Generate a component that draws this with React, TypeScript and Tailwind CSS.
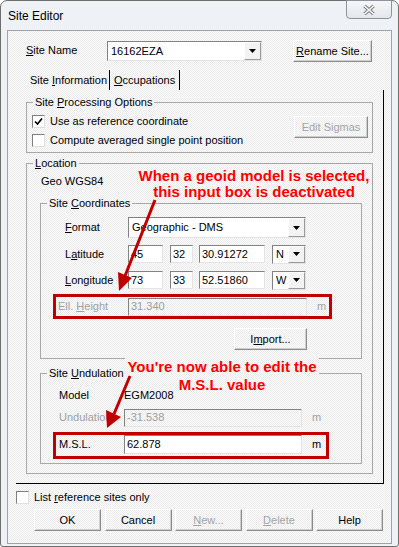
import React from "react";

const DITHER =
  "bg-[image:repeating-conic-gradient(#ebebeb_0%_25%,#fcfcfc_0%_50%)] bg-[length:2px_2px]";
const FIELD =
  "border border-t-[#828282] border-l-[#828282] border-b-[#e4e4e4] border-r-[#e4e4e4] flex items-center whitespace-nowrap overflow-hidden shrink-0";
const BTN =
  "h-[22px] shrink-0 flex items-center justify-center border border-t-white border-l-white border-b-[#8c8c8c] border-r-[#8c8c8c] shadow-[inset_-1px_-1px_0_#cfcfcf] whitespace-nowrap";
const GROUP = "border border-[#a8a8a8] min-w-0";
const LEGEND = "ml-[6px] px-[2px] leading-[12px]";

function Field({
  value,
  className = "",
  disabled = false,
}: {
  value: string;
  className?: string;
  disabled?: boolean;
}) {
  return (
    <div
      className={`${FIELD} pl-[2px] ${disabled ? "text-[#9d9d9d]" : "bg-white text-black"} ${className}`}
    >
      {value}
    </div>
  );
}

function Combo({ value, className = "" }: { value: string; className?: string }) {
  return (
    <div className={`${FIELD} bg-white ${className}`}>
      <span className="flex-1 pl-[3px]">{value}</span>
      <span className="w-[17px] h-full shrink-0 bg-[#f3f3f3] border border-t-white border-l-white border-b-[#9a9a9a] border-r-[#9a9a9a] flex items-center justify-center">
        <svg width="7" height="4" viewBox="0 0 7 4">
          <path d="M0 0H7L3.5 4Z" fill="#000" />
        </svg>
      </span>
    </div>
  );
}

function Check({ checked = false }: { checked?: boolean }) {
  return (
    <div className="w-[13px] h-[13px] shrink-0 bg-white border border-t-[#808080] border-l-[#808080] border-b-[#e0e0e0] border-r-[#e0e0e0] flex items-center justify-center">
      {checked && (
        <svg width="9" height="9" viewBox="0 0 9 9">
          <path d="M1 4.5L3.5 7L8 1.5" stroke="#000" strokeWidth="1.7" fill="none" />
        </svg>
      )}
    </div>
  );
}

export default function App() {
  return (
    <div className="w-[399px] h-[547px] relative font-['Liberation_Sans',Arial,sans-serif] text-[11px] text-black">
      <div className="w-full h-full border border-[#6e6e6e] rounded-t-[7px] rounded-b-[3px] bg-[#eef2f6] flex flex-col">
        {/* title bar */}
        <div className="h-[29px] shrink-0 flex items-start">
          <div className="self-center pl-[7px] text-[12px]">Site Editor</div>
          <div className="ml-auto mr-[6px] -mt-[1px] w-[46px] h-[19px] rounded-b-[4px] border border-[#8d949c] bg-gradient-to-b from-[#f6f7f9] to-[#e3e7ec] flex items-center justify-center">
            <svg width="14" height="12" viewBox="0 0 14 12">
              <path d="M2.5 2L11.5 10M11.5 2L2.5 10" stroke="#7a7a7a" strokeWidth="3.6" />
              <path d="M2.5 2L11.5 10M11.5 2L2.5 10" stroke="#fafafa" strokeWidth="1.6" />
            </svg>
          </div>
        </div>

        {/* client */}
        <div className={`mx-[6px] h-[514px] shrink-0 border border-[#9aa4ae] ${DITHER} flex flex-col`}>
          {/* site name row */}
          <div className="mt-[9px] h-[21px] pl-[18px] flex items-start">
            <div className="w-[81px] h-[21px] flex items-center">
              <span>
                <u>S</u>ite Name
              </span>
            </div>
            <Combo value="16162EZA" className="mt-[1px] w-[155px] h-[20px]" />
            <div className={`${BTN} ml-[31px] w-[79px] h-[21px]`}>
              <span>
                <u>R</u>ename Site...
              </span>
            </div>
          </div>

          {/* tabs */}
          <div className="mt-[9px] h-[20px] flex">
            <div className="ml-[8px] w-[94px] border-r border-black pl-[14px] flex items-center">
              <span>
                Site <u>I</u>nformation
              </span>
            </div>
            <div className="w-[70px] border-r border-black pl-[4px] flex items-center">
              <span>
                <u>O</u>ccupations
              </span>
            </div>
          </div>

          {/* tab page */}
          <div className="ml-[8px] w-[368px] h-[394px] border-r border-b border-black flex flex-col">
            <fieldset className={`${GROUP} ml-[10px] mt-[6px] w-[347px]`}>
              <legend className={LEGEND}>
                Site <u>P</u>rocessing Options
              </legend>
              <div className="flex">
                <div className="pl-[5px] pt-[4px] pb-[2px] flex flex-col">
                  <div className="h-[19px] flex items-center gap-[5px]">
                    <Check checked />
                    <span>Use as reference coordinate</span>
                  </div>
                  <div className="h-[19px] flex items-center gap-[5px]">
                    <Check />
                    <span>Compute averaged single point position</span>
                  </div>
                </div>
                <div className={`${BTN} ml-auto mr-[4px] mt-[8px] w-[74px] text-[#a3a3a3]`}>
                  Edit Sigmas
                </div>
              </div>
            </fieldset>

            <fieldset className={`${GROUP} ml-[10px] mt-[4px] w-[347px] pb-[9px]`}>
              <legend className={LEGEND}>
                <u>L</u>ocation
              </legend>
              <div className="mt-[5px] h-[14px] pl-[14px] flex items-center">Geo WGS84</div>

              <fieldset className={`${GROUP} ml-[13px] mt-[9px] w-[322px] pb-[8px]`}>
                <legend className={LEGEND}>
                  Site <u>C</u>oordinates
                </legend>
                <div className="mt-[8px] h-[21px] pl-[24px] flex items-center">
                  <div className="w-[63px]">
                    <u>F</u>ormat
                  </div>
                  <Combo value="Geographic - DMS" className="w-[178px] h-[21px]" />
                </div>
                <div className="mt-[7px] h-[18px] pl-[24px] flex items-center">
                  <div className="w-[63px]">
                    L<u>a</u>titude
                  </div>
                  <Field value="45" className="w-[35px] h-[18px]" />
                  <Field value="32" className="ml-[7px] w-[23px] h-[18px]" />
                  <Field value="30.91272" className="ml-[6px] w-[66px] h-[18px]" />
                  <Combo value="N" className="ml-[7px] w-[34px] h-[19px]" />
                </div>
                <div className="mt-[8px] h-[18px] pl-[24px] flex items-center">
                  <div className="w-[63px]">
                    <u>L</u>ongitude
                  </div>
                  <Field value="73" className="w-[35px] h-[18px]" />
                  <Field value="33" className="ml-[7px] w-[23px] h-[18px]" />
                  <Field value="52.51860" className="ml-[6px] w-[66px] h-[18px]" />
                  <Combo value="W" className="ml-[7px] w-[34px] h-[19px]" />
                </div>
                <div className="ml-[12px] mt-[5px] w-[279px] h-[25px] border-[3px] border-[#c00000] pl-[2px] flex items-center text-[#a0a0a0]">
                  <div className="w-[70px]">
                    Ell. <u>H</u>eight
                  </div>
                  <Field value="31.340" disabled className="w-[179px] h-[18px]" />
                  <span className="ml-[10px]">m</span>
                </div>
                <div className={`${BTN} ml-[193px] mt-[9px] w-[73px]`}>
                  <span>
                    I<u>m</u>port...
                  </span>
                </div>
              </fieldset>

              <fieldset className={`${GROUP} ml-[13px] mt-[8px] w-[322px] pb-[4px]`}>
                <legend className={LEGEND}>
                  Site <u>U</u>ndulation
                </legend>
                <div className="mt-[6px] h-[20px] pl-[18px] flex items-center">
                  <div className="w-[65px]">Model</div>
                  <span>EGM2008</span>
                </div>
                <div className="mt-[3px] h-[19px] pl-[18px] flex items-center text-[#a0a0a0]">
                  <div className="w-[65px]">Undulation</div>
                  <Field value="-31.538" disabled className="w-[178px] h-[18px]" />
                  <span className="ml-[10px]">m</span>
                </div>
                <div className="ml-[12px] mt-[5px] w-[276px] h-[27px] border-[3px] border-[#c00000] pl-[3px] flex items-start">
                  <div className="w-[65px] h-[19px] flex items-center">M.S.L.</div>
                  <Field value="62.878" className="w-[178px] h-[19px]" />
                  <span className="ml-[10px] h-[19px] flex items-center">m</span>
                </div>
              </fieldset>
            </fieldset>
          </div>

          {/* list reference */}
          <div className="mt-[6px] h-[14px] pl-[8px] flex items-center gap-[5px]">
            <Check />
            <span>
              List <u>r</u>eference sites only
            </span>
          </div>

          {/* buttons */}
          <div className="mt-[5px] pl-[26px] flex gap-[3.5px]">
            <div className={`${BTN} w-[67px]`}>OK</div>
            <div className={`${BTN} w-[67px]`}>Cancel</div>
            <div className={`${BTN} w-[67px] text-[#a3a3a3]`}>
              <span>
                <u>N</u>ew...
              </span>
            </div>
            <div className={`${BTN} w-[67px] text-[#a3a3a3]`}>
              <span>
                <u>D</u>elete
              </span>
            </div>
            <div className={`${BTN} w-[67px]`}>Help</div>
          </div>
        </div>
      </div>

      {/* annotation arrows */}
      <svg
        className="absolute left-0 top-0 pointer-events-none"
        width="399"
        height="547"
        viewBox="0 0 399 547"
      >
        <line x1="155" y1="200" x2="125" y2="276" stroke="#c00000" strokeWidth="3" />
        <polygon points="119,291 132,278 118,272" fill="#c00000" />
        <line x1="130" y1="376" x2="114" y2="414" stroke="#c00000" strokeWidth="3" />
        <polygon points="107,428 121,417 106,410" fill="#c00000" />
      </svg>

      {/* annotation texts */}
      <div className="absolute left-[125px] top-[168px] w-[258px] text-center font-bold text-[15px] leading-[16px] text-[#ff0000]">
        <div>When a geoid model is selected,</div>
        <div>this input box is deactivated</div>
      </div>
      <div className="absolute left-[112px] top-[358px] w-[220px] text-center font-bold text-[15px] leading-[18px] text-[#ff0000]">
        <div>
          <span className={`${DITHER} px-[2px]`}>You're now able to edit the</span>
        </div>
        <div>M.S.L. value</div>
      </div>
    </div>
  );
}
